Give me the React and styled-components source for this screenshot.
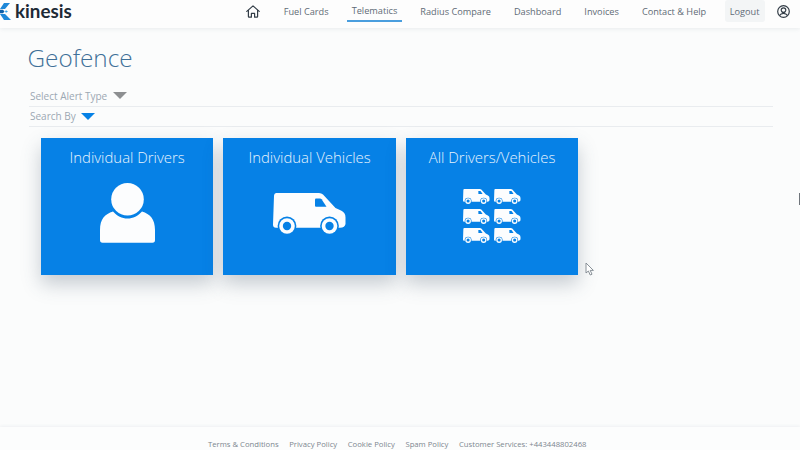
import React from "react";
import styled, { createGlobalStyle } from "styled-components";

const GlobalStyle = createGlobalStyle`
  html, body {
    margin: 0;
    padding: 0;
    background-color: #fbfcfc;
    overflow: hidden;
  }
  * {
    box-sizing: border-box;
  }
`;

const Page = styled.div`
  position: relative;
  width: 800px;
  height: 450px;
  display: flex;
  flex-direction: column;
  font-family: "Open Sans", "Liberation Sans", sans-serif;
  background-color: #fbfcfc;
  overflow: hidden;
`;

const Header = styled.header`
  height: 28px;
  flex: none;
  display: flex;
  justify-content: space-between;
  align-items: flex-start;
  background-color: #fdfdfd;
  box-shadow: 0 1px 4px rgba(70, 90, 110, 0.1);
`;

const Logo = styled.div`
  display: flex;
  align-items: center;
  height: 22px;
  gap: 3px;
`;

const LogoText = styled.span`
  font-family: "Lato", "Open Sans", sans-serif;
  font-size: 18.8px;
  font-weight: 700;
  line-height: 22px;
  color: #1e2a36;
`;

const Nav = styled.nav`
  display: flex;
  align-items: flex-start;
  gap: 14px;
  padding-right: 10.5px;
`;

const NavLink = styled.a`
  display: flex;
  align-items: center;
  height: 22px;
  padding: 0 4.5px;
  font-size: 9.2px;
  color: #5f6b76;
  text-decoration: none;
  border-bottom: ${(props) => (props.$active ? "2px solid #4a9ede" : "none")};
`;

const LogoutButton = styled(NavLink)`
  padding: 0 5px;
  background-color: #f3f5f6;
  border-radius: 3px;
`;

const IconLink = styled.a`
  display: flex;
  align-items: center;
  height: 22px;
  color: #333d47;
  margin-left: ${(props) => props.$before || 0}px;
  margin-right: ${(props) => props.$after || 0}px;
`;

const Main = styled.main`
  flex: 1;
  padding: 15px 27px 0 29px;
`;

const Title = styled.h1`
  margin: 0 0 13px -1.5px;
  font-size: 24.3px;
  font-weight: 300;
  line-height: 30px;
  color: #3f7098;
`;

const FilterRow = styled.div`
  display: flex;
  align-items: center;
  gap: ${(props) => props.$gap}px;
  height: 20.5px;
  padding-left: 1px;
  font-size: 10px;
  color: #9ca8b3;
  border-bottom: 1px solid #e9ecef;
`;

const Arrow = styled.span`
  width: 0;
  height: 0;
  border-left: 7.5px solid transparent;
  border-right: 7.5px solid transparent;
  border-top: 7px solid ${(props) => props.$color};
`;

const Cards = styled.div`
  display: flex;
  gap: 10.3px;
  margin: 11px 0 0 12px;
`;

const Card = styled.div`
  width: 172.2px;
  height: 137px;
  display: flex;
  flex-direction: column;
  align-items: center;
  background-color: #0681e6;
  box-shadow: 0 9px 18px rgba(60, 80, 100, 0.28);
`;

const CardTitle = styled.div`
  margin-top: 9px;
  font-size: 14.9px;
  font-weight: 300;
  line-height: 20px;
  color: #e6f3fd;
`;

const CardIcon = styled.div`
  flex: 1;
  display: flex;
  align-items: flex-start;
  justify-content: center;
  padding-top: ${(props) => props.$top}px;
`;

const FleetGrid = styled.div`
  display: grid;
  grid-template-columns: repeat(2, 26.5px);
  grid-auto-rows: 15px;
  column-gap: 4.3px;
  row-gap: 4.5px;
`;

const Footer = styled.footer`
  height: 23px;
  flex: none;
  display: flex;
  justify-content: center;
  gap: 10.6px;
  padding: 11px 5.6px 0 0;
  font-size: 7.7px;
  line-height: 12px;
  color: #7d8790;
  background-color: #fcfdfd;
  box-shadow: 0 -1px 3px rgba(70, 90, 110, 0.07);
`;

const MouseCursor = styled.svg`
  position: absolute;
  left: 585px;
  top: 262px;
`;

const TextCaret = styled.div`
  position: absolute;
  left: 799px;
  top: 193px;
  width: 1px;
  height: 12px;
  background-color: #6f757b;
`;

function KinesisMark() {
  return (
    <svg width="12" height="17" viewBox="0 0 12 20" preserveAspectRatio="none">
      <polygon points="4,0 10,0 5,7 0,7" fill="#1e88d8" />
      <polygon points="0,13 5,13 11,20 4,20" fill="#1e88d8" />
      <polygon points="0,8 3,8 4.5,10 3,12 0,12" fill="#0e5fa8" />
      <polygon points="6,8.5 8,10 6,11.5 5,10" fill="#35a4e8" />
    </svg>
  );
}

function HomeIcon() {
  return (
    <svg width="14" height="13" viewBox="0 0 14 13" fill="none" stroke="currentColor" strokeWidth="1.2" strokeLinejoin="round" strokeLinecap="round">
      <path d="M0.8 6.4 7 0.9l6.2 5.5" />
      <path d="M2.4 5.4v6.2c0 .4.2.6.6.6h2.4V8.4h3.2v3.8H11c.4 0 .6-.2.6-.6V5.4" />
    </svg>
  );
}

function UserCircleIcon() {
  return (
    <svg width="13" height="13" viewBox="0 0 13 13" fill="none" stroke="currentColor" strokeWidth="1.2">
      <circle cx="6.5" cy="6.5" r="5.8" />
      <circle cx="6.5" cy="5.1" r="2.3" />
      <path d="M2.6 10.6c.8-1.6 2.2-2.3 3.9-2.3s3.1.7 3.9 2.3" />
    </svg>
  );
}

function PersonIcon() {
  return (
    <svg width="55" height="60" viewBox="0 0 55 60" fill="#fcfdfe">
      <circle cx="27.5" cy="16.3" r="16.3" />
      <path d="M2.5 59.7Q0 59.7 0 57V47C0 36 5 31 13 28.5C17 33 22 35.5 27.5 35.5C33 35.5 38 33 42 28.5C50 31 55 36 55 47V57Q55 59.7 52.5 59.7Z" />
    </svg>
  );
}

function VanIcon({ width, height }) {
  return (
    <svg width={width} height={height} viewBox="0 0 72.5 41">
      <path
        d="M3.5 0H46Q48.5 0 50 1.6L62.5 15L68 17.6Q72.5 19.5 72.5 24.5V31Q72 34.7 67 34.7H3Q0 34.7 0 31.5L1 3Q1.2 0 3.5 0Z"
        fill="#fcfdfe"
      />
      <path d="M43 5.5H47Q48 5.5 48.6 6.3L53.5 13.7H43Q42 13.7 42 12.7V6.5Q42 5.5 43 5.5Z" fill="#0681e6" />
      <circle cx="14" cy="33" r="9.4" fill="#0681e6" />
      <circle cx="56.5" cy="33" r="9.4" fill="#0681e6" />
      <circle cx="14" cy="33" r="7.8" fill="#fcfdfe" />
      <circle cx="56.5" cy="33" r="7.8" fill="#fcfdfe" />
      <circle cx="14" cy="33" r="4.2" fill="#0681e6" />
      <circle cx="56.5" cy="33" r="4.2" fill="#0681e6" />
    </svg>
  );
}

const navItems = ["Fuel Cards", "Telematics", "Radius Compare", "Dashboard", "Invoices", "Contact & Help"];
const footerItems = ["Terms & Conditions", "Privacy Policy", "Cookie Policy", "Spam Policy", "Customer Services: +443448802468"];

export default function App() {
  return (
    <Page>
      <GlobalStyle />
      <Header>
        <Logo>
          <KinesisMark />
          <LogoText>kinesis</LogoText>
        </Logo>
        <Nav>
          <IconLink $after={5.5}>
            <HomeIcon />
          </IconLink>
          {navItems.map((item) => (
            <NavLink key={item} $active={item === "Telematics"}>
              {item}
            </NavLink>
          ))}
          <LogoutButton>Logout</LogoutButton>
          <IconLink $before={-2}>
            <UserCircleIcon />
          </IconLink>
        </Nav>
      </Header>
      <Main>
        <Title>Geofence</Title>
        <FilterRow $gap={6}>
          Select Alert Type <Arrow $color="#8d8f91" />
        </FilterRow>
        <FilterRow $gap={5}>
          Search By <Arrow $color="#0681e6" />
        </FilterRow>
        <Cards>
          <Card>
            <CardTitle>Individual Drivers</CardTitle>
            <CardIcon $top={16}>
              <PersonIcon />
            </CardIcon>
          </Card>
          <Card>
            <CardTitle>Individual Vehicles</CardTitle>
            <CardIcon $top={26}>
              <VanIcon width={72.5} height={41} />
            </CardIcon>
          </Card>
          <Card>
            <CardTitle>All Drivers/Vehicles</CardTitle>
            <CardIcon $top={22}>
              <FleetGrid>
                {[0, 1, 2, 3, 4, 5].map((i) => (
                  <VanIcon key={i} width={26.5} height={15} />
                ))}
              </FleetGrid>
            </CardIcon>
          </Card>
        </Cards>
      </Main>
      <Footer>
        {footerItems.map((item) => (
          <span key={item}>{item}</span>
        ))}
      </Footer>
      <MouseCursor width="10" height="14" viewBox="0 0 10 14">
        <path d="M1 1V11L3.4 9L5.2 13L7 12.2L5.2 8.4H8.4Z" fill="#fff" stroke="#7c858c" strokeWidth="0.9" strokeLinejoin="round" />
      </MouseCursor>
      <TextCaret />
    </Page>
  );
}
